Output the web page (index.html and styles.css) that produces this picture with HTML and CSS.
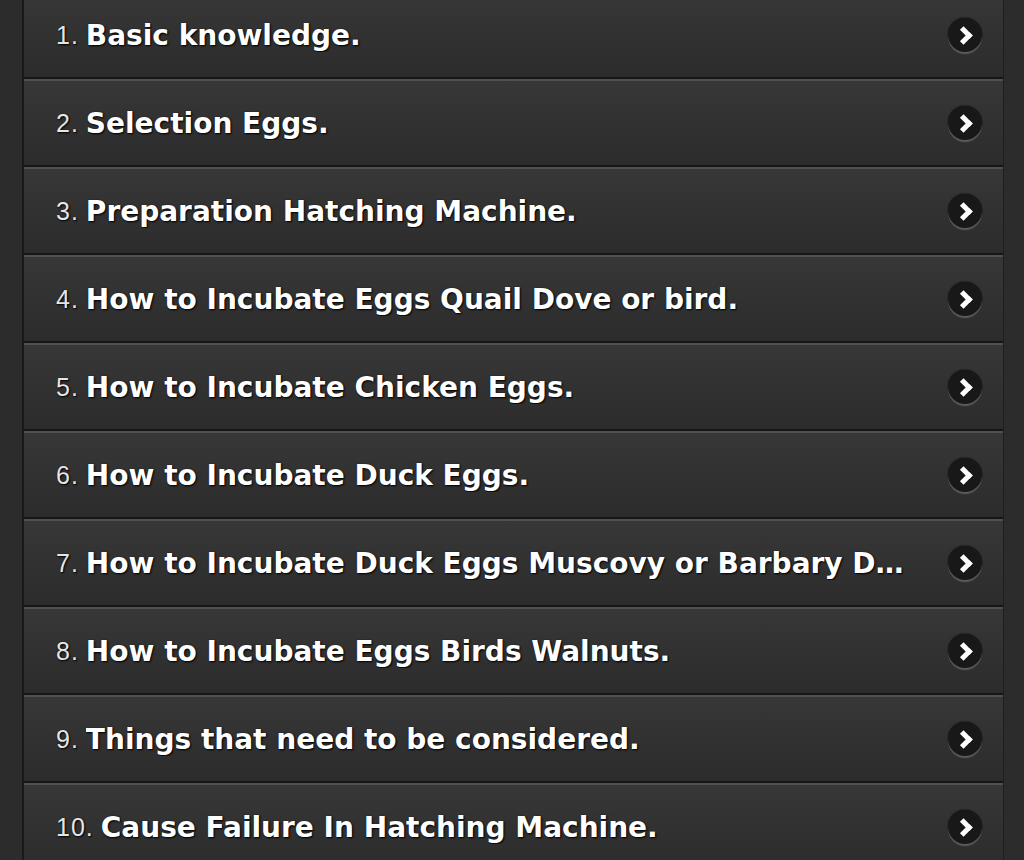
FILE: index.html
```html
<!DOCTYPE html>
<html lang="en">
<head>
    <meta charset="UTF-8">
    <meta name="viewport" content="width=device-width, initial-scale=1.0">
    <title>Hatching Eggs</title>
    <link rel="stylesheet" href="styles.css">
</head>
<body>
    <div class="page">
        <ol class="listview">
            <li><a href="#"><span class="num">1.</span> <span class="title">Basic knowledge.</span><span class="arrow"></span></a></li>
            <li><a href="#"><span class="num">2.</span> <span class="title">Selection Eggs.</span><span class="arrow"></span></a></li>
            <li><a href="#"><span class="num">3.</span> <span class="title">Preparation Hatching Machine.</span><span class="arrow"></span></a></li>
            <li><a href="#"><span class="num">4.</span> <span class="title">How to Incubate Eggs Quail Dove or bird.</span><span class="arrow"></span></a></li>
            <li><a href="#"><span class="num">5.</span> <span class="title">How to Incubate Chicken Eggs.</span><span class="arrow"></span></a></li>
            <li><a href="#"><span class="num">6.</span> <span class="title">How to Incubate Duck Eggs.</span><span class="arrow"></span></a></li>
            <li><a href="#"><span class="num">7.</span> <span class="title">How to Incubate Duck Eggs Muscovy or Barbary Duck.</span><span class="arrow"></span></a></li>
            <li><a href="#"><span class="num">8.</span> <span class="title">How to Incubate Eggs Birds Walnuts.</span><span class="arrow"></span></a></li>
            <li><a href="#"><span class="num">9.</span> <span class="title">Things that need to be considered.</span><span class="arrow"></span></a></li>
            <li><a href="#"><span class="num">10.</span> <span class="title">Cause Failure In Hatching Machine.</span><span class="arrow"></span></a></li>
        </ol>
    </div>
</body>
</html>
```

FILE: styles.css
```css
body {
    margin: 0;
    background-color: #2c2c2c;
    font-family: "DejaVu Sans", "Liberation Sans", sans-serif;
    overflow: hidden;
}

.page {
    padding: 0 20px 0 22px;
}

.listview {
    list-style: none;
    margin: -9px 0 0;
    padding: 0;
    border-left: 2px solid #1a1a1a;
    border-right: 1px solid #1e1e1e;
    border-radius: 10px;
}

.listview li {
    border-top: 2px solid #505050;
    border-bottom: 2px solid #161616;
    background: linear-gradient(#373737, #2c2c2c);
}

.listview li:first-child {
    border-top-right-radius: 10px;
}

.listview a {
    display: flex;
    align-items: center;
    height: 84px;
    padding: 0 21px 0 32px;
    color: #fff;
    text-decoration: none;
    text-shadow: 1px 1px 2px #000, 0 0 1px #000;
    white-space: nowrap;
}

.num {
    font-family: "Liberation Sans", sans-serif;
    font-size: 25px;
    letter-spacing: 1px;
    color: #e6e6e6;
    margin-right: 7px;
    flex-shrink: 0;
}

.title {
    font-size: 28px;
    font-weight: bold;
    overflow: hidden;
    text-overflow: ellipsis;
    flex: 1;
    min-width: 0;
}

.arrow {
    position: relative;
    flex-shrink: 0;
    width: 34px;
    height: 34px;
    margin-left: 26px;
    border-radius: 50%;
    background: #181818;
    box-shadow: 0 2px 1px #5c5c5c, 0 0 2px #000;
}

.arrow::after {
    content: "";
    position: absolute;
    left: 9px;
    top: 11px;
    width: 8px;
    height: 8px;
    border-top: 5px solid #fff;
    border-right: 5px solid #fff;
    transform: rotate(45deg);
}
```
